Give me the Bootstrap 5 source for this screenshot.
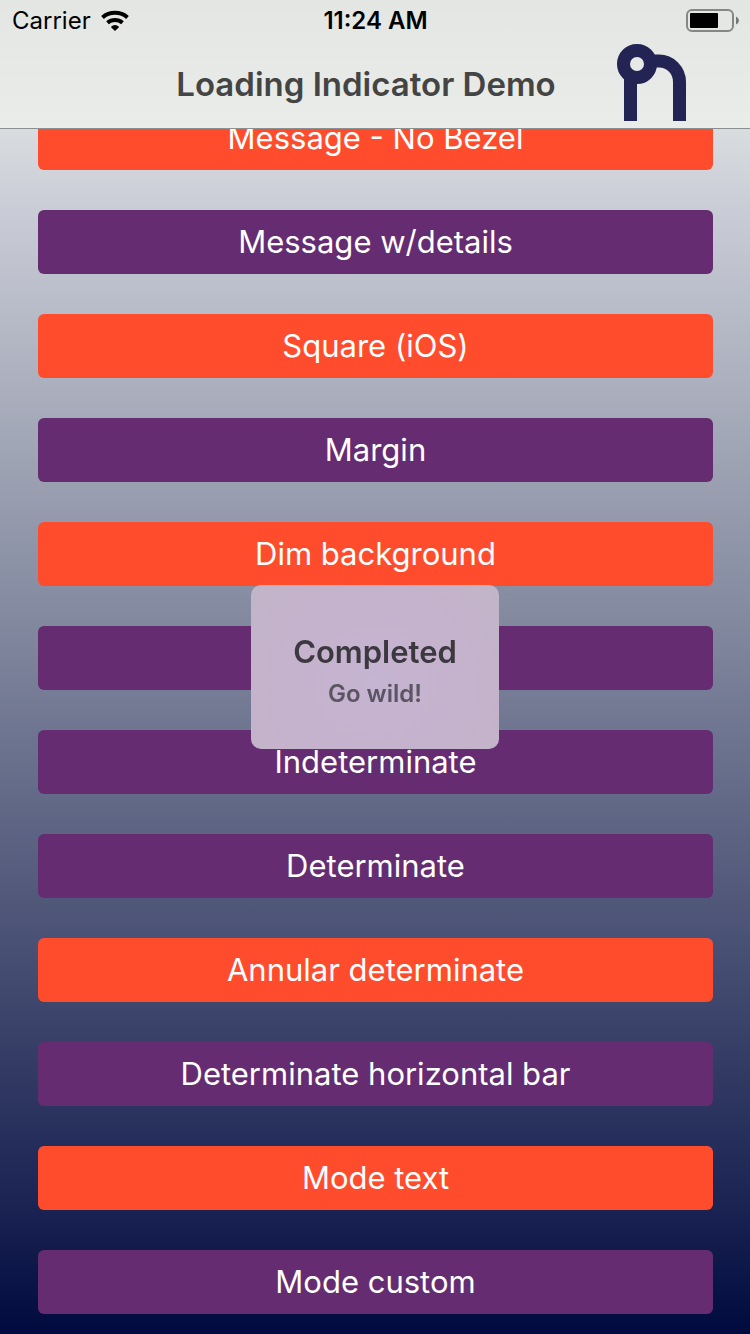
<!DOCTYPE html>
<html lang="en">
<head>
<meta charset="utf-8">
<meta name="viewport" content="width=device-width, initial-scale=1">
<title>Loading Indicator Demo</title>
<link rel="stylesheet" href="https://cdn.jsdelivr.net/npm/bootstrap@5.3.0/dist/css/bootstrap.min.css">
<style>
  body {
    font-family: Inter, "Liberation Sans", sans-serif;
    min-height: 100vh;
    background: linear-gradient(#e3e6e9 0%, #d8dcdf 10%, #cbced7 15%, #868ca1 45%, #1b2453 90%, #000a3e 100%) no-repeat;
  }
  .topbar {
    background: linear-gradient(#e4e6e3, #eaecea);
    border-bottom: 1px solid #8c8f90;
    color: #000;
  }
  .statusbar { height: 42px; font-size: 24px; line-height: 42px; padding: 0 11px 0 12px; }
  .clock { font-weight: 600; }
  .titlebar { height: 86px; padding-right: 18px; }
  .titlebar h1 { font-size: 33px; line-height: 84px; font-weight: 600; color: #444; }
  .brand { right: 60px; top: 0; }
  .demo-list { padding: 106px 37px 20px 38px; gap: 40px; }
  .demo-list .btn {
    height: 64px; padding: 0; border: 0; border-radius: 6px;
    font-size: 31px; line-height: 64px; color: #fff;
  }
  .btn-fire, .btn-fire:hover { background: #ff4c2d; }
  .btn-plum, .btn-plum:hover { background: #652c72; }
  .hud {
    min-width: 248px; padding: 45px 40px 35px; border-radius: 10px; z-index: 1040;
    background: radial-gradient(circle at 50% 60%, #c5b4d2, #c5b2cc 60%, #c2b5c8);
  }
  .hud-title { font-size: 31px; line-height: 44px; font-weight: 600; color: #3c3840; }
  .hud-detail { font-size: 24px; line-height: 40px; font-weight: 600; color: #5b5462; }
</style>
</head>
<body>
<header class="topbar fixed-top">
  <div class="statusbar row g-0">
    <div class="col d-flex align-items-center gap-2">
      <span>Carrier</span>
      <svg width="32" height="22" viewBox="0 0 32 22" fill="none" stroke="#000" stroke-width="4" aria-hidden="true">
        <path d="M3.500 7.400C10.500 1.300 21.500 1.300 28.500 7.400"/>
        <path d="M8.500 12.800C12.800 9.200 19.200 9.200 23.500 12.800"/>
        <path d="M11.800 17Q16 13.200 20.200 17L16 21z" fill="#000" stroke="none"/>
      </svg>
    </div>
    <div class="col-auto clock">11:24 AM</div>
    <div class="col d-flex align-items-center justify-content-end">
      <svg width="53" height="24" viewBox="0 0 53 24" aria-hidden="true">
        <rect x="1" y="1" width="46" height="21" rx="5" fill="none" stroke="#858785" stroke-width="2"/>
        <rect x="4" y="4" width="28" height="15" rx="1"/>
        <path d="M50 7.500q3 1.500 3 4t-3 4z" fill="#777"/>
      </svg>
    </div>
  </div>
  <div class="titlebar position-relative text-center">
    <h1 class="m-0">Loading Indicator Demo</h1>
    <svg class="brand position-absolute" width="75" height="80" viewBox="0 0 75 80" fill="none" stroke="#232454" stroke-width="13" aria-hidden="true">
      <circle cx="22" cy="22" r="13.500"/>
      <path d="M15.500 35V79M36 19H44C55 19 64.500 28 64.500 40V79"/>
    </svg>
  </div>
</header>

<main class="demo-list d-flex flex-column">
  <button type="button" class="btn btn-fire">Message - No Bezel</button>
  <button type="button" class="btn btn-plum">Message w/details</button>
  <button type="button" class="btn btn-fire">Square (iOS)</button>
  <button type="button" class="btn btn-plum">Margin</button>
  <button type="button" class="btn btn-fire">Dim background</button>
  <button type="button" class="btn btn-plum"></button>
  <button type="button" class="btn btn-plum">Indeterminate</button>
  <button type="button" class="btn btn-plum">Determinate</button>
  <button type="button" class="btn btn-fire">Annular determinate</button>
  <button type="button" class="btn btn-plum">Determinate horizontal bar</button>
  <button type="button" class="btn btn-fire">Mode text</button>
  <button type="button" class="btn btn-plum">Mode custom</button>
</main>

<div class="hud position-fixed top-50 start-50 translate-middle text-center" role="status">
  <div class="hud-title">Completed</div>
  <div class="hud-detail">Go wild!</div>
</div>
<script src="https://cdn.jsdelivr.net/npm/bootstrap@5.3.0/dist/js/bootstrap.bundle.min.js"></script>
</body>
</html>
